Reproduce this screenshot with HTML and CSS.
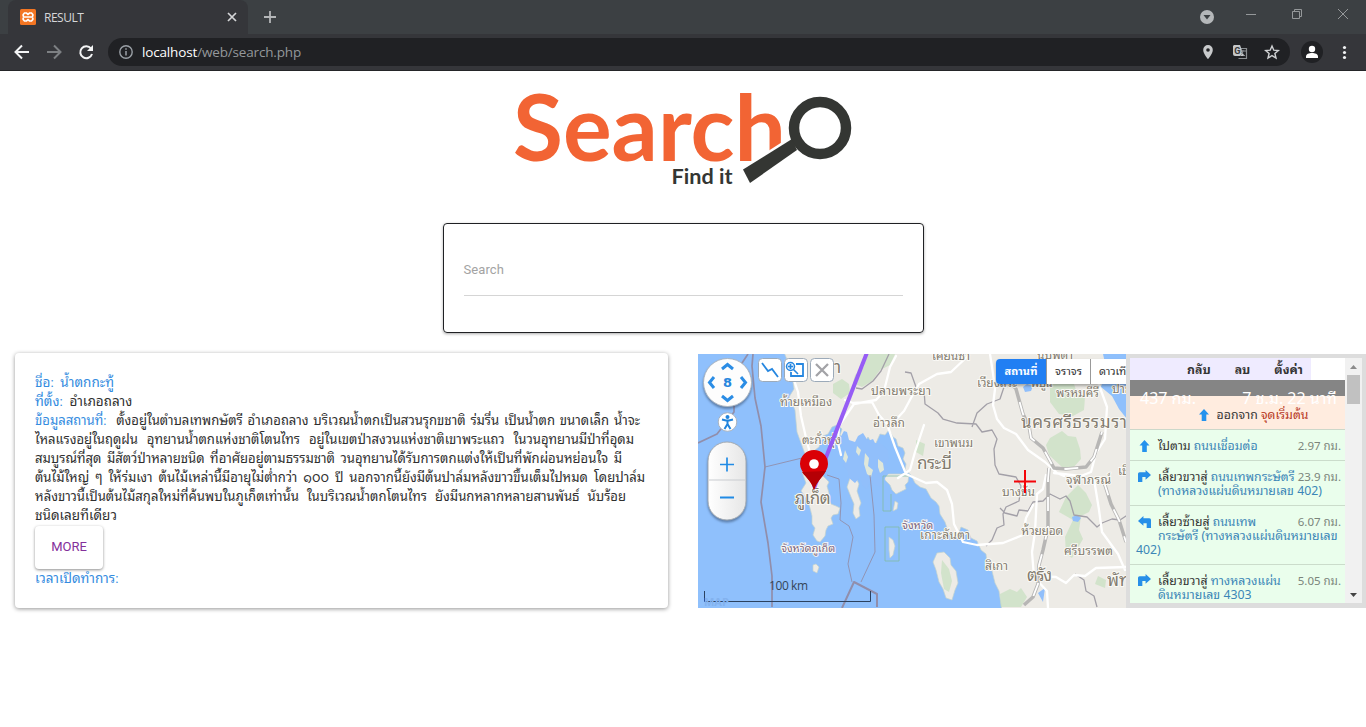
FILE: index.html
```html
<!DOCTYPE html>
<html lang="th">
<head>
<meta charset="utf-8">
<title>RESULT</title>
<link rel="stylesheet" href="styles.css">
</head>
<body>
<header class="browser">
  <div class="tabstrip">
    <div class="tab">
      <svg class="favicon" width="16" height="16" viewBox="0 0 16 16"><rect width="16" height="16" rx="1.500" fill="#f37623"/><path d="M4.500 4h2L8 5.300 9.500 4h2L12.800 5.500v1.500l-1 1 1 1v1.500L11.500 12h-2L8 10.700 6.500 12h-2L3.200 10.500V9l1-1-1-1V5.500z" fill="none" stroke="#fff" stroke-width="1.700"/><path d="M5 8h6" stroke="#fff" stroke-width="1.500"/></svg>
      <span class="tab-title">RESULT</span>
      <svg class="tab-close" width="10" height="10" viewBox="0 0 10 10"><path d="M1 1l8 8M9 1L1 9" stroke="#d5d6d8" stroke-width="1.700"/></svg>
    </div>
    <svg class="new-tab" width="12" height="12" viewBox="0 0 12 12"><path d="M6 0v12M0 6h12" stroke="#b4b6b8" stroke-width="1.800"/></svg>
    <svg class="window-controls" width="166" height="34" viewBox="1200 0 166 34">
      <circle cx="1207" cy="17" r="7" fill="#b4b7b9"/><path d="M1203.500 15h7l-3.500 4.500z" fill="#3c4043"/>
      <path d="M1246 14.500h10" stroke="#95989a"/>
      <path d="M1292.500 11.500h7v7h-7zM1294.500 11.500v-2h7v7h-2" fill="none" stroke="#95989a"/>
      <path d="M1338 9l10 10M1348 9l-10 10" stroke="#95989a"/>
    </svg>
  </div>
  <div class="toolbar">
    <svg class="nav-icons" width="108" height="37" viewBox="0 34 108 37" fill="none" stroke-width="2">
      <path d="M29 52H16M22 45.500L15.500 52l6.500 6.500" stroke="#f4f5f6"/>
      <path d="M47 52h13M54 45.500l6.500 6.500-6.500 6.500" stroke="#7d8083"/>
      <path d="M91 48.500A6 6 0 1 0 92 54" stroke="#f4f5f6"/><path d="M93 45v6h-6z" fill="#f4f5f6"/>
    </svg>
    <div class="omnibox">
      <svg width="14" height="14" viewBox="0 0 14 14"><circle cx="7" cy="7" r="6.200" fill="none" stroke="#9aa0a6" stroke-width="1.400"/><path d="M7 6v4.500M7 3.300v1.500" stroke="#9aa0a6" stroke-width="1.500"/></svg>
      <span class="url"><b>localhost</b>/web/search.php</span>
      <svg class="omni-icons" width="82" height="20" viewBox="1200 42 82 20">
        <path d="M1208 45a4.800 4.800 0 0 0-4.800 4.900c0 3.600 4.800 9.200 4.800 9.200s4.800-5.600 4.800-9.200A4.800 4.800 0 0 0 1208 45z" fill="#c8cacc"/><circle cx="1208" cy="50" r="1.800" fill="#202124"/>
        <path d="M1240 48.500h6.500v10h-8" fill="none" stroke="#8b8f92" stroke-width="1.200"/><path d="M1234 45h6l4 11h-9a2 2 0 0 1-2-2v-8z" fill="#c5c7c9"/>
        <text x="1234.300" y="54" class="translate-g">G</text><path d="M1240 51h6M1243 50c0 3-1 4-3 6M1241 52l4 4" stroke="#8b8f92" fill="none"/>
        <path d="M1272 46l1.800 4.200 4.500.3-3.400 3 1.100 4.500-4-2.400-4 2.400 1.100-4.500-3.400-3 4.500-.3z" fill="none" stroke="#d0d2d4" stroke-width="1.400"/>
      </svg>
    </div>
    <svg class="profile" width="70" height="37" viewBox="1296 34 70 37"><circle cx="1312" cy="52" r="11" fill="#202124"/><circle cx="1312" cy="49" r="3.200" fill="#fff"/><path d="M1306 58v-1.500c0-2.500 3-3.500 6-3.500s6 1 6 3.500V58z" fill="#fff"/><g fill="#f1f3f4"><circle cx="1344.500" cy="47.500" r="1.600"/><circle cx="1344.500" cy="52.500" r="1.600"/><circle cx="1344.500" cy="57.500" r="1.600"/></g></svg>
  </div>
</header>

<main>
  <svg class="logo" width="350" height="104" viewBox="508 88 350 104">
    <text class="logo-name" x="513" y="160.500" textLength="273" lengthAdjust="spacingAndGlyphs">Search</text>
    <path d="M740 169l50-32 6 8-50 34z" fill="#fff"/>
    <circle cx="820" cy="128" r="26" fill="#fff" stroke="#343633" stroke-width="10.500"/>
    <path d="M743 169.500l49-30.500 5 11-47 33z" fill="#343633"/>
    <text class="logo-tag" x="671.500" y="184" textLength="61" lengthAdjust="spacingAndGlyphs">Find it</text>
  </svg>

  <section class="search-box"><div class="search-field">Search</div></section>

  <div class="results">
    <article class="card">
      <div class="line"><span class="key">ชื่อ:&nbsp; น้ำตกกะทู้</span></div>
      <div class="line"><span class="key">ที่ตั้ง:</span>&nbsp; อำเภอถลาง</div>
      <div class="line fit w3"><span class="key">ข้อมูลสถานที่:</span>&nbsp; ตั้งอยู่ในตำบลเทพกษัตรี อำเภอถลาง บริเวณน้ำตกเป็นสวนรุกขชาติ ร่มรื่น เป็นน้ำตก ขนาดเล็ก น้ำจะ</div>
      <div class="line fit w4">ไหลแรงอยู่ในฤดูฝน อุทยานน้ำตกแห่งชาติโตนไทร อยู่ในเขตป่าสงวนแห่งชาติเขาพระแถว ในวนอุทยานมีป่าที่อุดม</div>
      <div class="line fit w5">สมบูรณ์ที่สุด มีสัตว์ป่าหลายชนิด ที่อาศัยอยู่ตามธรรมชาติ วนอุทยานได้รับการตกแต่งให้เป็นที่พักผ่อนหย่อนใจ มี</div>
      <div class="line fit w6">ต้นไม้ใหญ่ ๆ ให้ร่มเงา ต้นไม้เหล่านี้มีอายุไม่ต่ำกว่า ๑๐๐ ปี นอกจากนี้ยังมีต้นปาล์มหลังขาวขึ้นเต็มไปหมด โดยปาล์ม</div>
      <div class="line fit w7">หลังขาวนี้เป็นต้นไม้สกุลใหม่ที่ค้นพบในภูเก็ตเท่านั้น ในบริเวณน้ำตกโตนไทร ยังมีนกหลากหลายสานพันธ์ นับร้อย</div>
      <div class="line">ชนิดเลยทีเดียว</div>
      <a class="more">MORE</a>
      <div class="line"><span class="key">เวลาเปิดทำการ:</span></div>
    </article>

    <div class="map-widget">
      <div class="map">
        <svg width="428" height="254" viewBox="698 354 428 254">
          <rect x="698" y="354" width="428" height="254" fill="#8fc0fc"/>
          <!-- land -->
          <g fill="#edebe6" stroke="#c3d3cf" stroke-width=".7" stroke-linejoin="round">
            <path d="M783 350l8 19 3 20-5 8 6 13 2 22 8 22 1 9 4 2 4-6 1-9 4-3 4-11 5-2 4-7 5-2 5 4-2 6 3 3-3 5 6 2 1 8 3 1 2-8 3-2 4 5 2-6 4-1 3-5 5 8 3-2 4-9 5 1 4-5 4 7 3 2 2 7 5 2 2 5-2 6 3 5-1 6 6 5 4 8 5 4 6 2 5 9 5 4 3 4 1 8 5 8 3 9 4 5 5 2 4-11 7 3 3 8 6 3 4 9 5 4 1 9 5 8 3 12 4 8 3 21H1127V350z"/>
            <path d="M802 472l8-4 6 7 7 1 6 6-2 4 2 7-1 5 3 6 5 2 4 2-2 6-5 1-2 3 2 6-5 2-2 4-1 6-5 6-3-1-4-6 2-7-3-4v-8l-2-8-3-9-6-8 5-8z"/>
            <path d="M851 475l4 1 4 8-2 7 4 12-2 5 1 8-4 3-3-6 1-9-3-7-4-10zM884 474h25l-1 8-3 3 1 4-10 5-4-4-2-5-5-5zM937 553l7-1 6 6 1 7 5 6 2 12-3 7-3 10-6-2-3-9-4-7-3-12-3-8zM889 537l4 3 2 6-2 9-3 3-1-8zM813 565l3-1 3 3-2 6-4-2zM895 501l3 2-1 6-4 2z"/>
          </g>
          <path d="M1103 354h24v65l-8-10-7-13-11-9 4-14-6-5 6-5z" fill="#8fc0fc"/>
          <!-- forests -->
          <g class="forest" fill="#bfddb9" opacity=".6">
            <path d="M866 354h29l-5 11-10 5-8 11-10 6-9-4 2-8 9-8zM833 384l9-5 7 5 1 9-9 6-8-6zM1050 385l15-8 7 1 5 15 8 4-1 13-11 6-14-2-9-12zM1050 438l12-7 6 5 8 1 4 12 1 10-9 10-10-2-13-12-3-10zM1066 497l12-12 8 8 6 12-3 7-8 4-2 14 4 9-11 19-6-4-1-17 8-17-14-8zM942 560l7 9 3 12-3 11-5-3-3-16zM1000 594l10-5 7 3 4-4 6 9-6 10h-20zM916 440l9 4-2 12-7-4zM1098 576l8 4-1 8-10-4z"/>
          </g>
          <!-- inner bays and lakes -->
          <g fill="#91bffb"><path d="M840 438l4-7 3 1 2 8 6 2 3-6 5-3 5 8 5-2 2 4 7 1 6 7 1 8-3 6 3 8-4 5-3 9-8-2-3-5-4 9-5-4-2-8-5 6-6-5-2-8-4-5 2-9-2-7z"/><path d="M1023 387l4-3 6 2-2 5-6 1zM1072 517l5-2 4 3-3 4-5-1zM1038 593l7-5-2 14z"/></g>
          <g fill="#dfe7da"><path d="M865 453l4 5-1 8 5 4-2 7-4-3-3-10zM845 450l3 7-2 6-3-4zM878 459l5 4 1 7-4 3-2-6zM857 446l4 4-2 6-3-4z"/></g>
          <!-- administrative borders -->
          <g fill="none" stroke="#a3a0a8" stroke-width="1.300" stroke-linejoin="round">
            <g stroke="#918eab"><path d="M753 354l-1 12 3 32 6 28 4 41-4 35 7 41 4 33v31M748 354l-8 12 1 24-7 12v10l-17 22-19 9" stroke-width="1.700"/><path d="M765 467l37-9M827 475l12 4 2 24-1 17 9 6 4 11-5 27 4 18M870 475l4 40 1 37-14 30" stroke-width=".9"/><path d="M842 608l12-26 23 12v13" stroke-width="2"/></g>
            <path d="M856 388l6 1 11-8 8-10 8-17M905 372l6 1 5 14 8 3 1 14 13 9 5 6 14 4 19 1 6 8 10-2 5 9-3 10 1 16 4 9 17 3 5 9-2 15-13 6-3 7 1 11-7 3-5 12-6 6M972 427l5-14 10-9 13-5 4-12 7-8M1000 508l5 5 12 3 2-6 9 1 5-9 10-1 7-7 10 5 6-3 4 5 4 14 13 2 10 10 5-4 10-4 8 1 6-4 6 5 5-4 9 9M1075 574l9 6 2 11 8 5 3 11"/>
            <path d="M891 494v17h-8v-35h25M885 527h14v34h-14z" stroke="#82bba5" stroke-width=".8"/>
          </g>
          <!-- roads -->
          <g fill="none" stroke="#fff" stroke-width="2.300" stroke-linejoin="round" stroke-linecap="round">
            <path d="M786 360l8 20 4 12 3 24 6 26 6 22v31M841 455l-3-12 1-17 6-9 9-13 22-4 8-9 6-24 6-11M845 400l8 3 19-1 7 13 8 9 8 23 11 27 20 9 11-1 10 8 5 14 2 20 9 18 14 3 26-2 20-8 3-17 7-13M898 478l12-8 5-18 9-27M890 426l14-15 7-13 8-14 18-10 14-2 18-17M990 354l4 26 1 9-2 16 4 14 7 9 12 6 12 16 17 12 12 11 7 3M1054 473l27 3 10-4 5-19 9-14 2-32-9-25M1094 479l5 31 3 22 16 22 7 16M1034 576l22 1 10 6 8-8 11 1 11-8 30-1M1046 475l-3 14-6 5-2 38-3 20 2 25 13 14 1 17"/>
          </g>
          <g fill="none" stroke-linejoin="round">
            <path d="M1006 377l10 12 7 25 6 12 2 12 12 10 11 20 12 1 20-2 8-10 8-25M1049 468l-1 12v48l-5 22-4 15-1 19-5 13-9 8M1104 482l7 22 8 16 7 22" stroke="#b7b6b5" stroke-width="3.500"/>
            <path d="M1006 377l10 12 7 25 6 12 2 12 12 10 11 20 12 1 20-2 8-10 8-25M1049 468l-1 12v48l-5 22-4 15-1 19-5 13-9 8M1104 482l7 22 8 16 7 22" stroke="#fff" stroke-width="1.800" stroke-dasharray="14 15"/>
          </g>
          <!-- place names -->
          <g class="places">
            <text x="780" y="406" textLength="52">ท้ายเหมือง</text><text x="802" y="444" textLength="39">ตะกั่วทุ่ง</text><text x="871" y="395" textLength="60">ปลายพระยา</text><text x="873" y="427" textLength="32">อ่าวลึก</text><text x="834" y="373" class="big">า</text>
            <text x="932" y="360" textLength="38">เคียนซา</text><text x="1037" y="359" textLength="36">นบพิตำ</text><text x="977" y="387" textLength="40">เวียงสระ</text><text x="1030" y="387" textLength="22">พิปูน</text><text x="1056" y="397" textLength="43">พรหมคีรี</text><text x="1112" y="393">ปาก</text>
            <text x="934" y="447" textLength="39">เขาพนม</text><text x="917" y="469" class="big" textLength="35">กระบี่</text><text x="1021" y="428" class="big" textLength="116">นครศรีธรรมราช</text><text x="1118" y="475">เชียร</text><text x="1066" y="484" textLength="45">จุฬาภรณ์</text><text x="1002" y="496" textLength="33">บางขัน</text>
            <text x="902" y="529" class="province">จังหวัด</text><text x="920" y="539" textLength="50">เกาะลันตา</text><text x="1021" y="535" textLength="42">ห้วยยอด</text><text x="1064" y="555" textLength="49">ศรีบรรพต</text><text x="985" y="570" textLength="23">สิเกา</text><text x="1027" y="581" class="big" textLength="25">ตรัง</text><text x="1107" y="586" class="big">พัทลุง</text>
            <text x="794" y="504" class="big" textLength="36">ภูเก็ต</text><text x="781" y="552" class="province" textLength="54">จังหวัดภูเก็ต</text>
          </g>
          <path d="M868 350L814 488" stroke="#965cf5" stroke-width="4"/>
          <path d="M814 490c-3-11-14-17-14-26a14 14 0 1 1 28 0c0 9-11 15-14 26z" fill="#da0006"/><path d="M802 472l24-1c-4 7-9 10-12 19-2-9-8-12-12-18z" fill="#b50005"/><circle cx="814" cy="464" r="4.800" fill="#fff"/>
          <path d="M1025 470v23M1014 481.500h22" stroke="#f40408" stroke-width="2"/>
          <!-- pan, zoom and tool controls -->
          <defs><linearGradient id="slider"><stop offset="0" stop-color="#fff"/><stop offset="1" stop-color="#e6e6e6"/></linearGradient></defs>
          <g class="controls">
            <circle class="raised" cx="727.500" cy="382.500" r="24" fill="#fdfdfd" stroke="#aab4c0"/>
            <path d="M722 369l5.500-4.500L733 369M722 396l5.500 4.500L733 396M714 377l-4.500 5.500L714 388M741 377l4.500 5.500L741 388" fill="none" stroke="#2b8de5" stroke-width="3"/>
            <text x="723" y="387" class="zoom-level">8</text>
            <circle cx="727.500" cy="422" r="9.300" fill="#fff" stroke="#aab4c0"/><circle cx="727.500" cy="417" r="2" fill="#2184dc"/><path d="M722 419.500l4 1h3l4-1M727.500 420v4l-3 5M727.500 424l3 5" stroke="#2184dc" stroke-width="2" fill="none"/>
            <rect class="raised" x="708" y="442" width="38" height="78" rx="19" fill="url(#slider)" stroke="#a3aab2"/><path d="M709 480h36" stroke="#c9ccd0"/>
            <path d="M720 464.500h14M727 457.500v14" stroke="#218be5" stroke-width="1.700"/><path d="M720 497.500h14" stroke="#218be5" stroke-width="2"/>
            <g fill="#fff" stroke="#9caab9"><rect x="758.500" y="358.500" width="23" height="23" rx="4"/><rect x="784.500" y="358.500" width="23" height="23" rx="4"/><rect x="810.500" y="358.500" width="23" height="23" rx="4"/></g>
            <path d="M762 363l6 8 4-2 6 8" fill="none" stroke="#2687e0" stroke-width="1.800"/>
            <path d="M796 364h7v12h-12v-4" fill="none" stroke="#2687e0" stroke-width="1.800"/><circle cx="790.500" cy="366.500" r="4" fill="#e4f1ff" stroke="#2687e0" stroke-width="1.500"/><path d="M788 366.500h5M790.500 364v5M793.500 369.500l4.500 4.500" stroke="#2687e0" stroke-width="1.600"/>
            <path d="M816 364l12 12M828 364l-12 12" stroke="#a3a3a7" stroke-width="2.300"/>
            <path d="M704.500 591v10.500h166V591" fill="none" stroke="#2b4260"/>
            <text x="769" y="590" class="scale" textLength="39">100 km</text><text x="704" y="606" class="watermark">MAP</text>
          </g>
        </svg>
        <div class="map-types"><span class="active">สถานที่</span><span>จราจร</span><span>ดาวเทียม</span></div>
      </div>
      <aside class="route">
        <div class="route-content">
          <nav class="route-menu"><b>กลับ</b><b>ลบ</b><b>ตั้งค่า</b></nav>
          <div class="summary"><span>437 กม.</span><span>7 ช.ม. 22 นาที</span></div>
          <div class="start"><svg width="10" height="12" viewBox="0 0 10 12"><path d="M5 0l5 5.500H7.300V12H2.700V5.500H0z" fill="#2492ed"/></svg><span>ออกจาก <em>จุดเริ่มต้น</em></span></div>
          <div class="step r1"><svg width="13" height="13" viewBox="-1.500 -1 13 13"><path d="M5 0l5 5.500H7.300V12H2.700V5.500H0z" fill="#2492ed"/></svg><p>ไปตาม <a>ถนนเชื่อมต่อ</a></p><span class="dist">2.97 กม.</span></div>
          <div class="step r2"><svg width="13" height="13" viewBox="0 0 12 12"><path d="M0 11V3.500Q0 2 1.500 2H7V0l5 4.500L7 9V6.500H4V11z" fill="#278fe8"/></svg><p>เลี้ยวขวาสู่ <a>ถนนเทพกระษัตรี<br>(ทางหลวงแผ่นดินหมายเลข 402)</a></p><span class="dist">23.9 กม.</span></div>
          <div class="step r3"><svg width="13" height="13" viewBox="0 0 12 12"><path d="M12 12V4.500Q12 3 10.500 3H5V1L0 5.500 5 10V7.500h3V12z" fill="#278fe8"/></svg><p>เลี้ยวซ้ายสู่ <a>ถนนเทพ<br>กระษัตรี (ทางหลวงแผ่นดินหมายเลข<br><span class="outdent">402)</span></a></p><span class="dist">6.07 กม.</span></div>
          <div class="step r4"><svg width="13" height="13" viewBox="0 0 12 12"><path d="M0 11V3.500Q0 2 1.500 2H7V0l5 4.500L7 9V6.500H4V11z" fill="#278fe8"/></svg><p>เลี้ยวขวาสู่ <a>ทางหลวงแผ่น<br>ดินหมายเลข 4303</a></p><span class="dist">5.05 กม.</span></div>
        </div>
        <div class="scrollbar"><svg width="17" height="245" viewBox="0 0 17 245"><path d="M5 11l3.500-4 3.500 4z" fill="#8b8b8b"/><path d="M2 17h13v29H2z" fill="#c1c1c1"/><path d="M5 235h7l-3.500 4z" fill="#444"/></svg></div>
      </aside>
    </div>
  </div>
</main>
</body>
</html>
```
FILE: styles.css
```css
* { box-sizing: border-box; }
body { margin: 0; width: 1366px; height: 727px; overflow: hidden; background: #fff; font-family: Roboto, "Noto Sans Thai Looped", Loma, Waree, "Noto Sans Thai", "DejaVu Sans", sans-serif; }
svg { display: block; flex: none; }

.browser { height: 71px; background: #35363a; border-bottom: 1px solid #242528; }
.tabstrip { height: 34px; background: #3c4043; display: flex; align-items: center; padding-left: 8px; }
.tab { width: 240px; height: 34px; background: #35363a; border-radius: 8px 8px 0 0; display: flex; align-items: center; padding: 0 11px 0 12px; }
.tab-title { flex: 1; margin-left: 8px; color: #d5d7d9; font: 12px "Open Sans", sans-serif; letter-spacing: -.5px; }
.new-tab { margin-left: 16px; }
.window-controls { margin-left: auto; }
.toolbar { height: 36px; display: flex; align-items: center; }
.omnibox { width: 1182px; height: 28px; border-radius: 14px; background: #202124; display: flex; align-items: center; padding: 0 8px 0 11px; }
.url { margin-left: 9px; color: #94989b; font: 13.5px "Open Sans", sans-serif; letter-spacing: -.16px; }
.url b { color: #fff; font-weight: 400; }
.omni-icons { margin-left: auto; }
.profile { margin-left: 6px; }
.translate-g { font: bold 9px Roboto, sans-serif; fill: #34373a; }

main { display: flex; flex-direction: column; align-items: center; padding-top: 17px; }
.logo-name { font: 700 92px Lato, sans-serif; fill: #f26434; }
.logo-tag { font: 700 20px Lato, sans-serif; fill: #343633; }
.search-box { width: 481px; height: 110px; margin-top: 31px; padding: 30px 20px; border: 1px solid #202124; border-radius: 4px; box-shadow: 0 1px 3px #aaa; }
.search-field { height: 42px; border-bottom: 1px solid #d5d5d5; color: #a3a3a3; font-size: 13px; line-height: 32px; letter-spacing: .1px; }
.results { width: 1366px; margin-top: 20px; padding-left: 15px; display: flex; align-items: flex-start; gap: 30px; }
.card { width: 653px; height: 255px; padding: 20px; border-radius: 4px; box-shadow: 0 1px 4px rgba(0,0,0,.42); color: #303030; font-size: 13.5px; }
.line { height: 19px; line-height: 19px; white-space: nowrap; }
.fit { font-size: 13.1px; text-align: justify; text-align-last: justify; }
.w3 { width: 605px; }
.w4 { width: 599px; }
.w5 { width: 587px; }
.w6 { width: 610px; }
.w7 { width: 591px; }
.key { color: #348ce0; }
.more { display: flex; width: 68px; height: 43px; margin: 1px 0 0; padding-bottom: 2px; align-items: center; justify-content: center; border-radius: 4px; color: #842f9b; box-shadow: 0 1px 3px rgba(0,0,0,.45); font-size: 13px; }

.map-widget { width: 668px; height: 254px; margin-top: 1px; display: flex; }
.map { position: relative; width: 428px; height: 254px; overflow: hidden; }
.places { font: 12px "Noto Sans Thai Looped", Loma, Waree, "Noto Sans Thai", "DejaVu Sans", sans-serif; fill: #827b6f; stroke: #faf9f5; stroke-width: 2px; paint-order: stroke; }
.places .big { font-size: 17px; }
.places .province { font-size: 11px; fill: #7a6580; }
.zoom-level { font: bold 13px "DejaVu Sans", sans-serif; fill: #2786dd; }
.raised { filter: drop-shadow(0 2px 1px rgba(40,60,90,.5)); }
.scale { font: 12px "Open Sans", sans-serif; fill: #344558; }
.watermark { font: bold 11px "Open Sans", sans-serif; fill: #83b2ee; }
.map-types { position: absolute; left: 298px; top: 5px; display: flex; background: #fff; border-radius: 4px; height: 25px; box-shadow: 0 2px 3px rgba(0,0,0,.3); font-size: 11px; line-height: 25px; white-space: nowrap; color: #333; }
.map-types span { padding: 0 8px; border-right: 1px solid #999; min-width: 44px; text-align: center; }
.map-types .active { width: 51px; padding: 0; background: #217ff3; color: #fff; font-weight: 700; border-radius: 4px 0 0 4px; }

.route { width: 240px; height: 254px; padding: 4px 4px 5px; background: #ddd; display: flex; font: 12.3px/14px "Noto Sans", "Noto Sans Thai Looped", Loma, Waree, "Noto Sans Thai", "DejaVu Sans", sans-serif; color: #353535; }
.route-content { width: 215px; height: 245px; overflow: hidden; background: #fff; }
.route-menu { width: 181px; height: 22px; background: #efebff; display: flex; justify-content: flex-end; gap: 24px; padding-right: 8px; line-height: 24px; white-space: nowrap; }
.summary { height: 16px; background: #858585; color: #fff; display: flex; justify-content: space-between; padding: 6px 8px 0 10px; font-size: 16px; line-height: 24px; white-space: nowrap; }
.summary span { position: relative; }
.start { height: 34px; background: #ffecdf; border-bottom: 1px solid #ccd8ca; display: flex; align-items: center; justify-content: center; gap: 8px; padding: 4px 0 0 32px; white-space: nowrap; }
.start em { font-style: normal; color: #b6351b; }
.step { background: #eafeec; border-bottom: 1px solid #cbdccb; display: flex; align-items: flex-start; padding: 9px 4px 0 8px; white-space: nowrap; }
.step p { margin: 0 0 0 7px; width: 139px; }
.step a { color: #3b86b7; }
.step .dist { margin-left: auto; color: #7b857b; font-size: 11.5px; line-height: 13px; }
.r1 { height: 31px; }
.r2 { height: 45px; }
.r3 { height: 59px; }
.r4 { height: 45px; }
.outdent { margin-left: -22px; }
.scrollbar { width: 17px; background: #f1f1f1; }
```
